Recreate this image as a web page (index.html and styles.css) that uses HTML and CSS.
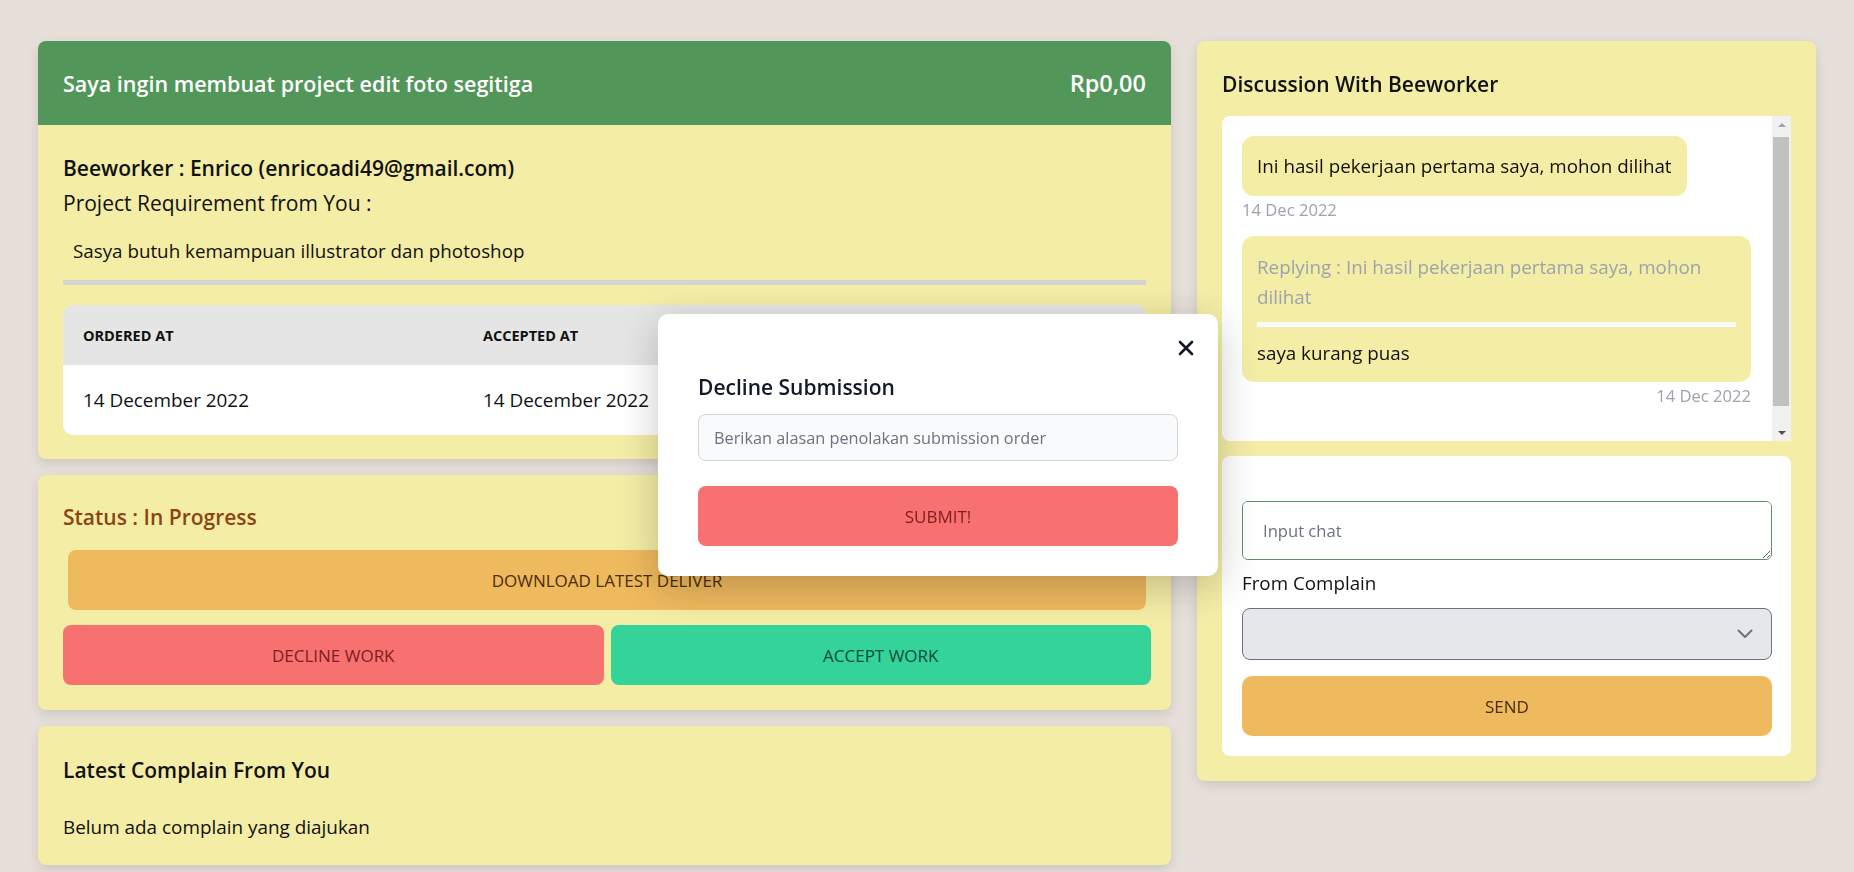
FILE: index.html
```html
<!DOCTYPE html>
<html lang="id">
<head>
<meta charset="utf-8">
<title>Project Detail</title>
<link rel="stylesheet" href="styles.css">
</head>
<body>
<div class="page">
  <div class="left">
    <section class="card project">
      <header class="project-head">
        <h1 class="project-title">Saya ingin membuat project edit foto segitiga</h1>
        <span class="price">Rp0,00</span>
      </header>
      <div class="project-body">
        <p class="worker">Beeworker : Enrico (enricoadi49@gmail.com)</p>
        <p class="req-label">Project Requirement from You :</p>
        <p class="req">Sasya butuh kemampuan illustrator dan photoshop</p>
        <div class="divider"></div>
        <div class="table-wrap">
          <table class="dates">
            <thead>
              <tr><th class="col1">Ordered At</th><th class="col2">Accepted At</th><th>Deadline</th></tr>
            </thead>
            <tbody>
              <tr><td>14 December 2022</td><td>14 December 2022</td><td>21 December 2022</td></tr>
            </tbody>
          </table>
        </div>
      </div>
    </section>

    <section class="card status">
      <h2 class="status-title">Status : In Progress</h2>
      <button class="btn btn-download">Download Latest Deliver</button>
      <div class="btn-row">
        <button class="btn btn-decline">Decline Work</button>
        <button class="btn btn-accept">Accept Work</button>
      </div>
    </section>

    <section class="card complain">
      <h2 class="complain-title">Latest Complain From You</h2>
      <p class="complain-text">Belum ada complain yang diajukan</p>
    </section>
  </div>

  <aside class="card discussion">
    <h2 class="discussion-title">Discussion With Beeworker</h2>
    <div class="chat">
      <div class="chat-list">
        <div class="bubble bubble-short">Ini hasil pekerjaan pertama saya, mohon dilihat</div>
        <div class="chat-date">14 Dec 2022</div>
        <div class="bubble bubble-reply">
          <div class="reply-quote">Replying : Ini hasil pekerjaan pertama saya, mohon dilihat</div>
          <div class="reply-sep"></div>
          <div class="reply-text">saya kurang puas</div>
        </div>
        <div class="chat-date chat-date-right">14 Dec 2022</div>
      </div>
      <div class="scrollbar">
        <div class="sb-btn"><span class="sb-up"></span></div>
        <div class="sb-track"><div class="sb-thumb"></div></div>
        <div class="sb-btn"><span class="sb-down"></span></div>
      </div>
    </div>
    <form class="chat-form">
      <textarea class="chat-input" placeholder="Input chat"></textarea>
      <label class="form-label">From Complain</label>
      <div class="select-wrap">
        <select class="complain-select"><option></option></select>
        <svg class="select-chevron" width="20" height="20" viewBox="0 0 20 20"><path d="M3.5 6.5l6.5 6.5 6.5-6.5" fill="none" stroke="#6b7280" stroke-width="2" stroke-linecap="round" stroke-linejoin="round"/></svg>
      </div>
      <button type="button" class="btn btn-send">Send</button>
    </form>
  </aside>
</div>

<div class="modal">
  <svg class="modal-close" width="16" height="16" viewBox="0 0 16 16"><path d="M2 2L14 14M14 2L2 14" stroke="#111827" stroke-width="2.6" stroke-linecap="round"/></svg>
  <h3 class="modal-title">Decline Submission</h3>
  <input class="modal-input" type="text" placeholder="Berikan alasan penolakan submission order">
  <button class="btn btn-submit">Submit!</button>
</div>
</body>
</html>
```

FILE: styles.css
```css
* { box-sizing: border-box; }
html, body { margin: 0; padding: 0; }
body {
  background: #e7e0da;
  font-family: "Open Sans", "Noto Sans", sans-serif;
  color: #111;
  height: 872px;
  overflow: hidden;
}
.page {
  display: grid;
  grid-template-columns: 1133px 619px;
  column-gap: 26px;
  padding: 41px 0 0 38px;
  align-items: start;
}
.left { display: flex; flex-direction: column; gap: 16px; }
.card {
  background: #f4eda6;
  border-radius: 8px;
  box-shadow: 0 4px 12px rgba(0, 0, 0, 0.12);
}

/* project card */
.project-head {
  height: 84px;
  background: #52965a;
  border-radius: 8px 8px 0 0;
  display: flex;
  align-items: center;
  justify-content: space-between;
  padding: 0 25px;
  color: #fff;
}
.project-title { margin: 0; font-size: 21.5px; font-weight: 600; }
.price { font-size: 23.5px; font-weight: 600; }
.project-body { padding: 28px 25px 24px; }
.worker { margin: 0; font-size: 21px; font-weight: 600; line-height: 30px; }
.req-label { margin: 5px 0 0; font-size: 21px; line-height: 30px; }
.req { margin: 20px 0 0; padding-left: 10px; font-size: 18.8px; line-height: 27px; }
.divider { margin-top: 15px; height: 5px; background: #d4d4d4; }
.table-wrap { margin-top: 20px; border-radius: 10px; overflow: hidden; background: #fff; }
.dates { width: 100%; border-collapse: collapse; }
.dates th {
  height: 60px;
  background: #e5e5e5;
  text-align: left;
  padding: 0 20px;
  font-size: 14.5px;
  font-weight: 700;
  text-transform: uppercase;
}
.dates .col1, .dates .col2 { width: 400px; }
.dates td { height: 70px; padding: 0 20px; font-size: 18.9px; }

/* status card */
.status { padding: 27px 25px 25px; }
.status-title { margin: 0; font-size: 21px; font-weight: 600; line-height: 30px; color: #8b4513; }
.btn {
  display: flex;
  align-items: center;
  justify-content: center;
  height: 60px;
  border: 0;
  border-radius: 8px;
  font-family: inherit;
  font-size: 17px;
  text-transform: uppercase;
  cursor: pointer;
}
.btn-download { margin: 18px 0 0 5px; width: calc(100% - 5px); background: #efb95e; color: #4a2e0c; }
.btn-row { display: flex; gap: 7px; margin: 15px -5px 0 0; }
.btn-row .btn { flex: 1; }
.btn-decline { background: #f87171; color: #7f1d1d; }
.btn-accept { background: #34d399; color: #064e3b; }

/* complain card */
.complain { padding: 29px 25px 24px; }
.complain-title { margin: 0; font-size: 21px; font-weight: 600; line-height: 30px; }
.complain-text { margin: 29px 0 0; font-size: 18.9px; line-height: 27px; }

/* discussion */
.discussion { padding: 28px 25px 25px; }
.discussion-title { margin: 0; font-size: 21px; font-weight: 600; line-height: 30px; }
.chat {
  margin-top: 17px;
  height: 325px;
  background: #fff;
  border-radius: 8px 0 0 8px;
  display: flex;
  overflow: hidden;
}
.chat-list { flex: 1; padding: 20px 21px 0 20px; }
.bubble {
  background: #f4eda6;
  border-radius: 12px;
  font-size: 18.8px;
  line-height: 30px;
}
.bubble-short { width: fit-content; padding: 15px; }
.bubble-reply { margin-top: 14px; padding: 16px 15px 14px; }
.reply-quote { color: #9ca3af; }
.reply-sep { margin-top: 10px; height: 5px; background: #fafafa; }
.reply-text { margin-top: 11px; }
.chat-date { margin-top: 2px; font-size: 16.6px; line-height: 24px; color: #9ca3af; }
.chat-date-right { text-align: right; }
.scrollbar { width: 19px; background: #f1f1f1; display: flex; flex-direction: column; }
.sb-btn { height: 17px; display: flex; align-items: center; justify-content: center; }
.sb-up, .sb-down { width: 0; height: 0; border-left: 4px solid transparent; border-right: 4px solid transparent; }
.sb-up { border-bottom: 4px solid #a3a3a3; }
.sb-down { border-top: 4px solid #505050; }
.sb-track { flex: 1; padding: 4px 2px 18px 1px; }
.sb-thumb { height: 100%; background: #c1c1c1; }

.chat-form {
  margin-top: 15px;
  background: #fff;
  border-radius: 8px;
  padding: 45px 19px 20px 20px;
}
.chat-input {
  display: block;
  width: 100%;
  height: 59px;
  border: 1px solid #5b8f65;
  border-radius: 6px;
  padding: 17px 20px;
  font-family: inherit;
  font-size: 16.6px;
  line-height: 24px;
  resize: vertical;
  background: #fff;
}
.chat-input::placeholder { color: #6b7280; }
.form-label { display: block; margin-top: 10px; font-size: 18.8px; line-height: 27px; }
.select-wrap { position: relative; margin-top: 11px; }
.complain-select {
  display: block;
  width: 100%;
  height: 52px;
  appearance: none;
  background: #e5e7eb;
  border: 1px solid #6b7280;
  border-radius: 8px;
  font-family: inherit;
  font-size: 16px;
}
.select-chevron { position: absolute; right: 17px; top: 16px; }
.btn-send { margin-top: 16px; width: 100%; background: #efb95e; color: #4a2e0c; border-radius: 10px; }

/* modal */
.modal {
  position: absolute;
  left: 658px;
  top: 314px;
  width: 560px;
  padding: 58px 40px 30px;
  background: #fff;
  border-radius: 10px;
  box-shadow: 0 10px 40px rgba(0, 0, 0, 0.22);
}
.modal-close { position: absolute; top: 26px; right: 24px; }
.modal-title { margin: 0; font-size: 21px; font-weight: 600; line-height: 30px; color: #111827; }
.modal-input {
  display: block;
  width: 100%;
  height: 47px;
  margin-top: 12px;
  padding: 0 15px;
  background: #f9fafb;
  border: 1px solid #d1d5db;
  border-radius: 8px;
  font-family: inherit;
  font-size: 16.3px;
}
.modal-input::placeholder { color: #6b7280; }
.btn-submit { margin-top: 25px; width: 100%; background: #f87171; color: #7f1d1d; }
```
